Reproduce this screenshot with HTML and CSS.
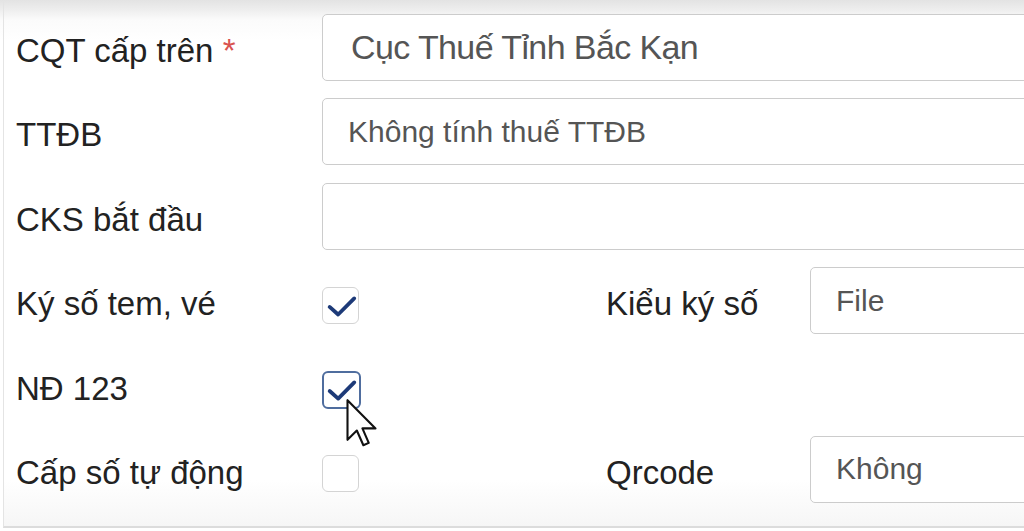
FILE: index.html
```html
<!DOCTYPE html>
<html lang="vi">
<head>
    <meta charset="UTF-8">
    <title>Thông tin đơn vị</title>
    <link rel="stylesheet" href="styles.css">
</head>
<body>
<div class="panel">
    <div class="form">
        <label class="lbl">CQT cấp trên <span class="req">*</span></label>
        <input type="text" class="txt txt-big wide" value="Cục Thuế Tỉnh Bắc Kạn" readonly/>

        <label class="lbl">TTĐB</label>
        <input type="text" class="txt wide" value="Không tính thuế TTĐB" readonly/>

        <label class="lbl">CKS bắt đầu</label>
        <input type="text" class="txt wide" value="" readonly/>

        <label class="lbl">Ký số tem, vé</label>
        <span class="check on">
            <svg viewBox="0 0 37 37"><path d="M7 20 L16 28 L33 11"/></svg>
        </span>
        <label class="lbl lbl-2">Kiểu ký số</label>
        <input type="text" class="txt" value="File" readonly/>

        <label class="lbl">NĐ 123</label>
        <span class="check on focus">
            <svg viewBox="0 0 37 37"><path d="M6 19 L15 27 L32 10"/></svg>
        </span>
        <span></span>
        <span></span>

        <label class="lbl">Cấp số tự động</label>
        <span class="check"></span>
        <label class="lbl lbl-2">Qrcode</label>
        <input type="text" class="txt" value="Không" readonly/>
    </div>
</div>
<!-- con trỏ chuột nằm đè lên ô NĐ 123 -->
<svg class="cursor" viewBox="0 0 13 21">
    <path d="M0.5 0.5 L0.5 17.5 L4.5 13.5 L7.3 19.8 L9.6 18.8 L6.9 12.6 L12.5 12.6 Z"/>
</svg>
</body>
</html>
```

FILE: styles.css
```css
*{
    margin:0;
    padding:0;
    box-sizing: border-box;
}
body,html{
    width:1024px;
    height:531px;
    overflow: hidden;
}
body{
    position: relative;
    background: linear-gradient(#e3e3e3 0, #eeeeee 10px, #fbfbfb 20px, #ffffff 40px);
    font-family: "Liberation Sans", Arial, sans-serif;
    color: #222222;
}
.panel{
    width:1200px;
    height:528px;
    margin-left:3px;
    border-left:1px solid #e4e4e4;
    border-bottom:2px solid #dcdcdc;
    background: linear-gradient(rgba(255,255,255,0) 0, rgba(255,255,255,0) 480px, #f6f6f6 526px);
}
.form{
    display: grid;
    grid-template-columns: 318px 284px 204px 1fr;
    grid-auto-rows: 67px;
    row-gap: 17.4px;
    padding-top:14px;
}
.lbl{
    align-self: center;
    margin-top:7px;
    padding-left:12px;
    font-size:33px;
    white-space: nowrap;
}
.lbl-2{
    padding-left:0;
}
.req{
    color: #d9534f;
}
.txt{
    display: block;
    width:100%;
    height:67px;
    border:1px solid #cccccc;
    border-radius:5px;
    background: #ffffff;
    padding:0 25px;
    font-family: "Liberation Sans", Arial, sans-serif;
    font-size:30px;
    color: #555555;
    outline: none;
}
.txt-big{
    font-size:34px;
    letter-spacing:-0.6px;
    padding-left:28px;
}
.wide{
    grid-column: 2 / -1;
}
.check{
    align-self: center;
    margin-top:9px;
    width:37px;
    height:37px;
    border:1px solid #d4d4d4;
    border-radius:6px;
    background: #ffffff;
}
.check svg{
    display: block;
    width:35px;
    height:35px;
    fill: none;
    stroke: #1d3a78;
    stroke-width:4;
    stroke-linecap: round;
    stroke-linejoin: round;
}
.check.focus{
    width:39px;
    height:38px;
    border:2px solid #4f6d9e;
    margin-top:10px;
}
.cursor{
    position: absolute;
    left:346px;
    top:399px;
    width:31px;
    height:49px;
    fill: #ffffff;
    stroke: #111111;
    stroke-width:0.9;
    stroke-linejoin: round;
}
```
